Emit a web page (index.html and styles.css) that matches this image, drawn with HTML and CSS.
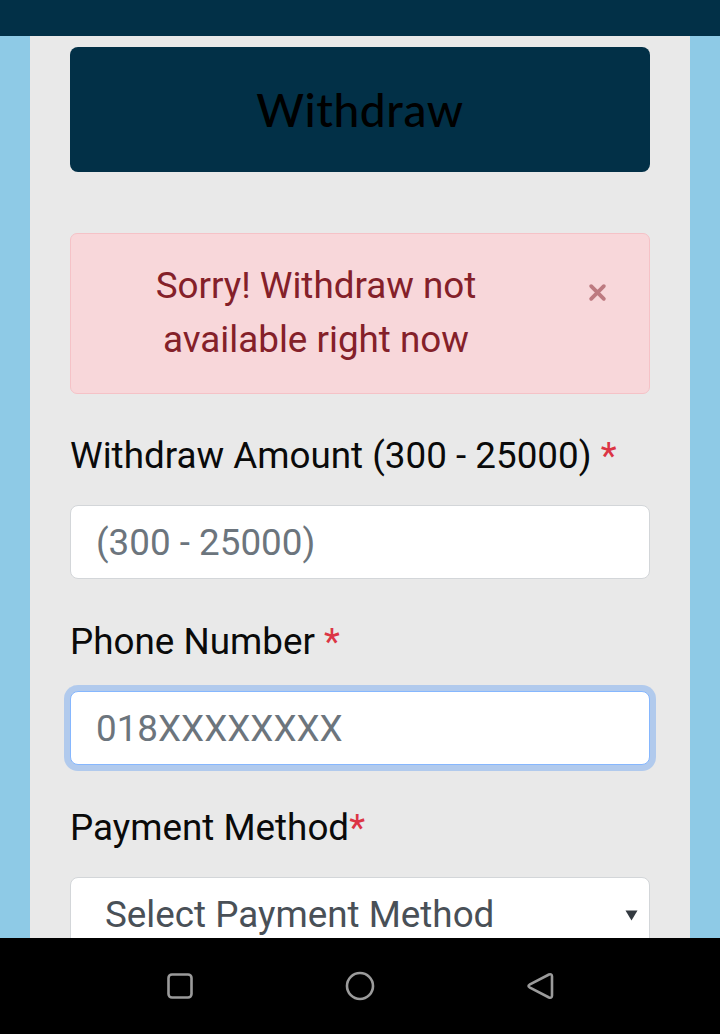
FILE: index.html
```html
<!DOCTYPE html>
<html lang="en">
<head>
<meta charset="utf-8">
<title>Withdraw</title>
<link rel="stylesheet" href="styles.css">
</head>
<body>
<div class="screen">
  <div class="statusbar"></div>
  <main class="page">
    <div class="panel">
      <div class="title-card"><h1 class="title">Withdraw</h1></div>

      <div class="alert" role="alert">
        <p class="alert-text">Sorry! Withdraw not available right now</p>
        <button class="close" type="button" aria-label="Close">
          <svg width="19" height="19" viewBox="0 0 18 18"><path d="M3 3L15 15M15 3L3 15" stroke="currentColor" stroke-width="3.6" stroke-linecap="round"/></svg>
        </button>
      </div>

      <div class="field">
        <label class="label">Withdraw Amount (300 - 25000) <span class="req">*</span></label>
        <input class="control" type="text" placeholder="(300 - 25000)">
      </div>

      <div class="field">
        <label class="label">Phone Number <span class="req">*</span></label>
        <input class="control focused" type="text" placeholder="018XXXXXXXX">
      </div>

      <div class="field">
        <label class="label">Payment Method<span class="req">*</span></label>
        <div class="select">
          <span class="select-text">Select Payment Method</span>
          <svg class="caret" width="13" height="11" viewBox="0 0 13 11"><path d="M0.5 0.5H12.5L6.5 10.5Z" fill="#343a40"/></svg>
        </div>
      </div>
    </div>
  </main>
  <nav class="navbar">
    <span class="nav-btn">
      <svg width="30" height="30" viewBox="0 0 30 30"><rect x="3.5" y="3.5" width="23" height="23" rx="3.5" fill="none" stroke="#9b9b9b" stroke-width="2.6"/></svg>
    </span>
    <span class="nav-btn">
      <svg width="32" height="32" viewBox="0 0 32 32"><circle cx="16" cy="16" r="13" fill="none" stroke="#9b9b9b" stroke-width="2.6"/></svg>
    </span>
    <span class="nav-btn">
      <svg width="32" height="32" viewBox="0 0 32 32"><path d="M25 4.5 Q28 3.5 28 6.5 V25.5 Q28 28.5 25 27.5 L5.5 17.3 Q3.6 16 5.5 14.7 Z" fill="none" stroke="#9b9b9b" stroke-width="2.6" stroke-linejoin="round"/></svg>
    </span>
  </nav>
</div>
</body>
</html>
```

FILE: styles.css
```css
* { box-sizing: border-box; }

html, body {
  margin: 0;
  padding: 0;
  height: 100%;
}

body {
  font-family: Roboto, "Liberation Sans", sans-serif;
  background: #000;
}

.screen {
  display: flex;
  flex-direction: column;
  height: 100vh;
  overflow: hidden;
}

.statusbar {
  height: 36px;
  flex: none;
  background: #023047;
}

.page {
  flex: 1;
  min-height: 0;
  overflow: hidden;
  background: #8ecae6;
  padding: 0 30px;
}

.panel {
  background: #e9e9e9;
  height: 100%;
  padding: 11px 40px 0;
}

.title-card {
  height: 125px;
  background: #023047;
  border-radius: 8px;
  display: flex;
  align-items: center;
  justify-content: center;
}

.title {
  margin: 0;
  font-family: Lato, "Open Sans", sans-serif;
  font-weight: 500;
  font-size: 46px;
  letter-spacing: 0.6px;
  color: #000;
}

.alert {
  margin-top: 61px;
  background: #f8d7da;
  border: 1px solid #f5c2c7;
  border-radius: 7px;
  padding: 25px 27px 26px 25px;
  display: flex;
  align-items: flex-start;
}

.alert-text {
  flex: 1;
  margin: 0;
  text-align: center;
  font-size: 36.8px;
  line-height: 54px;
  color: #842029;
}

.close {
  flex: none;
  width: 50px;
  height: 66px;
  margin-left: 36px;
  padding: 0;
  border: 0;
  background: none;
  color: #842029;
  opacity: 0.5;
  display: flex;
  align-items: center;
  justify-content: center;
}

.field {
  margin-top: 36px;
}

.alert + .field {
  margin-top: 35px;
}

.label {
  display: block;
  font-size: 36.8px;
  line-height: 54px;
  color: #0a0a0a;
  margin-bottom: 22px;
}

.req {
  color: #dc3545;
}

.control {
  display: block;
  width: 100%;
  height: 74px;
  padding: 0 25px;
  font-family: Roboto, "Liberation Sans", sans-serif;
  font-size: 36.8px;
  color: #212529;
  background: #fff;
  border: 1.5px solid #d3d6d9;
  border-radius: 8px;
  outline: none;
}

.control::placeholder {
  color: #6c757d;
}

.control.focused {
  border-color: #86b7fe;
  box-shadow: 0 0 0 6px rgba(13, 110, 253, 0.25);
}

.select {
  height: 75px;
  margin-top: 1px;
  background: #fff;
  border: 1.5px solid #d3d6d9;
  border-radius: 8px;
  display: flex;
  align-items: center;
  justify-content: space-between;
  padding: 0 11px 0 34px;
}

.select-text {
  font-size: 36.8px;
  color: #495057;
}

.caret {
  flex: none;
  margin-top: 1px;
}

.navbar {
  height: 96px;
  flex: none;
  background: #000;
  display: grid;
  grid-template-columns: repeat(3, 180px);
  padding: 0 90px;
  align-items: center;
}

.nav-btn {
  display: flex;
  align-items: center;
  justify-content: center;
}
```
